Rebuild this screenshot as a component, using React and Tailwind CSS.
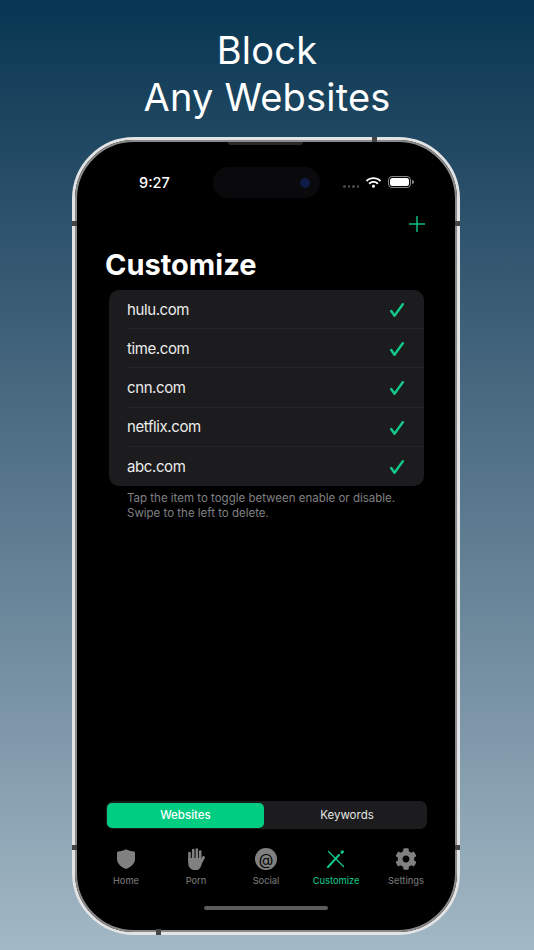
import React from 'react';
import { FaWifi, FaCog } from 'react-icons/fa';

const sites = ['hulu.com', 'time.com', 'cnn.com', 'netflix.com', 'abc.com'];

const Check = () => (
  <svg width="14" height="14" viewBox="0 0 14 14" fill="none" stroke="#13c98a" strokeWidth="2.4" strokeLinecap="round" strokeLinejoin="round">
    <path d="M1.2 8l3.3 4.8L12.8 1.2" />
  </svg>
);

const ShieldIcon = () => (
  <svg width="18" height="20" viewBox="0 0 18 20" fill="#808080">
    <path d="M9 0.3C11 1.3 14 2.2 17 2.6Q18 2.8 18 3.8V10C18 14.5 14 18 9 20C4 18 0 14.5 0 10V3.8Q0 2.8 1 2.6C4 2.2 7 1.3 9 0.3Z" />
  </svg>
);

const HandIcon = () => (
  <svg width="18" height="22" viewBox="0 0 18 22" fill="#808080" stroke="#808080" strokeLinecap="round">
    <path d="M2.5 12V5M6.2 11V2M9.8 11V1.5M13.2 12V3.5" strokeWidth="2.6" fill="none" />
    <path d="M13.5 15L16.5 9.5" strokeWidth="2.8" fill="none" />
    <path d="M1.2 10H14.5V14L15 15C14 19 12.5 22 10 22H7C4 22 1.2 19 1.2 15Z" stroke="none" />
  </svg>
);

const AtIcon = () => (
  <div className="w-[22px] h-[22px] rounded-full bg-[#808080] flex items-center justify-center">
    <span className="text-[15px] leading-none text-black">@</span>
  </div>
);

const ToolsIcon = () => (
  <svg width="18" height="18" viewBox="0 0 18 18" fill="none" stroke="#13c98a" strokeLinecap="round">
    <path d="M1 17L12 5" strokeWidth="2" />
    <path d="M15 2.2l0.4-0.4" strokeWidth="3" />
    <path d="M1.5 1.5l15 15" strokeWidth="1.3" />
  </svg>
);

const tabs = [
  { label: 'Home', icon: <ShieldIcon /> },
  { label: 'Porn', icon: <HandIcon /> },
  { label: 'Social', icon: <AtIcon /> },
  { label: 'Customize', icon: <ToolsIcon />, active: true },
  { label: 'Settings', icon: <FaCog size={22} color="#808080" /> },
];

const App = () => {
  return (
    <div className="w-[534px] h-[950px] overflow-hidden flex flex-col items-center bg-gradient-to-b from-[#063652] to-[#a3b8c5] font-['Inter',sans-serif]">
      <h1 className="mt-[27px] text-center text-white text-[38px] leading-[47px] tracking-[0.2px] font-normal">
        Block
        <br />
        Any Websites
      </h1>

      {/* phone */}
      <div className="relative mt-[16px] mr-[2px] w-[388px] h-[798px] rounded-[62px] border-[3px] border-[#e2e3e5] bg-black">
        <div className="w-full h-full rounded-[59px] border-2 border-[#8a8a8a] bg-black flex flex-col overflow-hidden">
          <div className="h-[46px] relative">
            <span className="absolute left-[62px] top-[31px] text-white text-[14.5px] leading-[20px] font-medium">9:27</span>
            <div className="absolute left-[136px] top-[25px] w-[107px] h-[31px] rounded-full bg-[#0a0a0c] flex items-center justify-end pr-[10px]">
              <div className="w-[10px] h-[10px] rounded-full bg-[#101c45]" />
            </div>
            <div className="absolute left-[266px] top-[43px] flex gap-[2px]">
              {[0, 1, 2, 3].map((i) => (
                <div key={i} className="w-[2.5px] h-[2.5px] rounded-full bg-[#4a4a4a]" />
              ))}
            </div>
            <div className="absolute left-[289px] top-[33px]">
              <FaWifi size={15} color="#fff" />
            </div>
            <div className="absolute left-[311px] top-[34px] flex items-center gap-[1px]">
              <div className="w-[23px] h-[12px] rounded-[4px] border border-[#888] p-[1px]">
                <div className="w-full h-full rounded-[2.5px] bg-white" />
              </div>
              <div className="w-[1.5px] h-[4px] rounded-r bg-[#888]" />
            </div>
          </div>

          <div className="flex justify-end pr-[30px] mt-[28px]">
            <svg width="16" height="16" viewBox="0 0 16 16" stroke="#13b97f" strokeWidth="1.5">
              <path d="M8 0v16M0 8h16" />
            </svg>
          </div>

          <h2 className="mt-[15px] ml-[28px] text-white text-[29px] leading-[36px] font-bold">Customize</h2>

          <div className="mt-[7px] ml-[32px] w-[315px] rounded-[10px] bg-[#1c1c1e]">
            {sites.map((site, i) => (
              <div key={site} className="pl-[18px]">
                <div className={`h-[39.2px] pt-[2px] pr-[20px] flex items-center justify-between ${i < sites.length - 1 ? 'border-b border-[#262628]' : ''}`}>
                  <span className="text-[15px] tracking-[-0.4px] text-[#ececec]">{site}</span>
                  <Check />
                </div>
              </div>
            ))}
          </div>

          <p className="mt-[5px] ml-[50px] text-[11.5px] leading-[15px] text-[#808084]">
            Tap the item to toggle between enable or disable.
            <br />
            Swipe to the left to delete.
          </p>

          <div className="flex-1" />

          <div className="ml-[29px] w-[321px] h-[28px] rounded-[7px] bg-[#1c1c1e] flex items-center pl-[1px]">
            <div className="w-[157px] h-[25px] pt-[1px] rounded-[5px] bg-[#00cc82] flex items-center justify-center text-white text-[11.5px] font-medium">
              Websites
            </div>
            <div className="flex-1 pt-[1px] pl-[3px] text-center text-[#e6e6e6] text-[11.5px]">Keywords</div>
          </div>

          <div className="mt-[18px] ml-[14px] flex">
            {tabs.map((tab) => (
              <div key={tab.label} className="w-[70px] flex flex-col items-center">
                <div className="h-[24px] flex items-center justify-center">{tab.icon}</div>
                <span className={`mt-[3px] text-[9.2px] leading-[14px] font-medium ${tab.active ? 'text-[#13b97f]' : 'text-[#6f6f6f]'}`}>
                  {tab.label}
                </span>
              </div>
            ))}
          </div>

          <div className="mt-[18px] mb-[20px] mx-auto w-[124px] h-[4px] rounded-full bg-[#5c5c5c]" />
        </div>

        {/* frame marks */}
        <div className="absolute left-[-3px] top-[81px] w-[5px] h-[5px] bg-[#444]" />
        <div className="absolute right-[-3px] top-[81px] w-[5px] h-[5px] bg-[#444]" />
        <div className="absolute left-[-3px] top-[705px] w-[5px] h-[5px] bg-[#444]" />
        <div className="absolute right-[-3px] top-[705px] w-[5px] h-[5px] bg-[#444]" />
        <div className="absolute top-[-3px] left-[297px] w-[5px] h-[5px] bg-[#444]" />
        <div className="absolute bottom-[-3px] left-[81px] w-[5px] h-[6px] bg-[#444]" />
        <div className="absolute top-[2px] left-[153px] w-[75px] h-[3px] rounded-b bg-[#2a2a2a]" />
      </div>
    </div>
  );
};

export default App;
